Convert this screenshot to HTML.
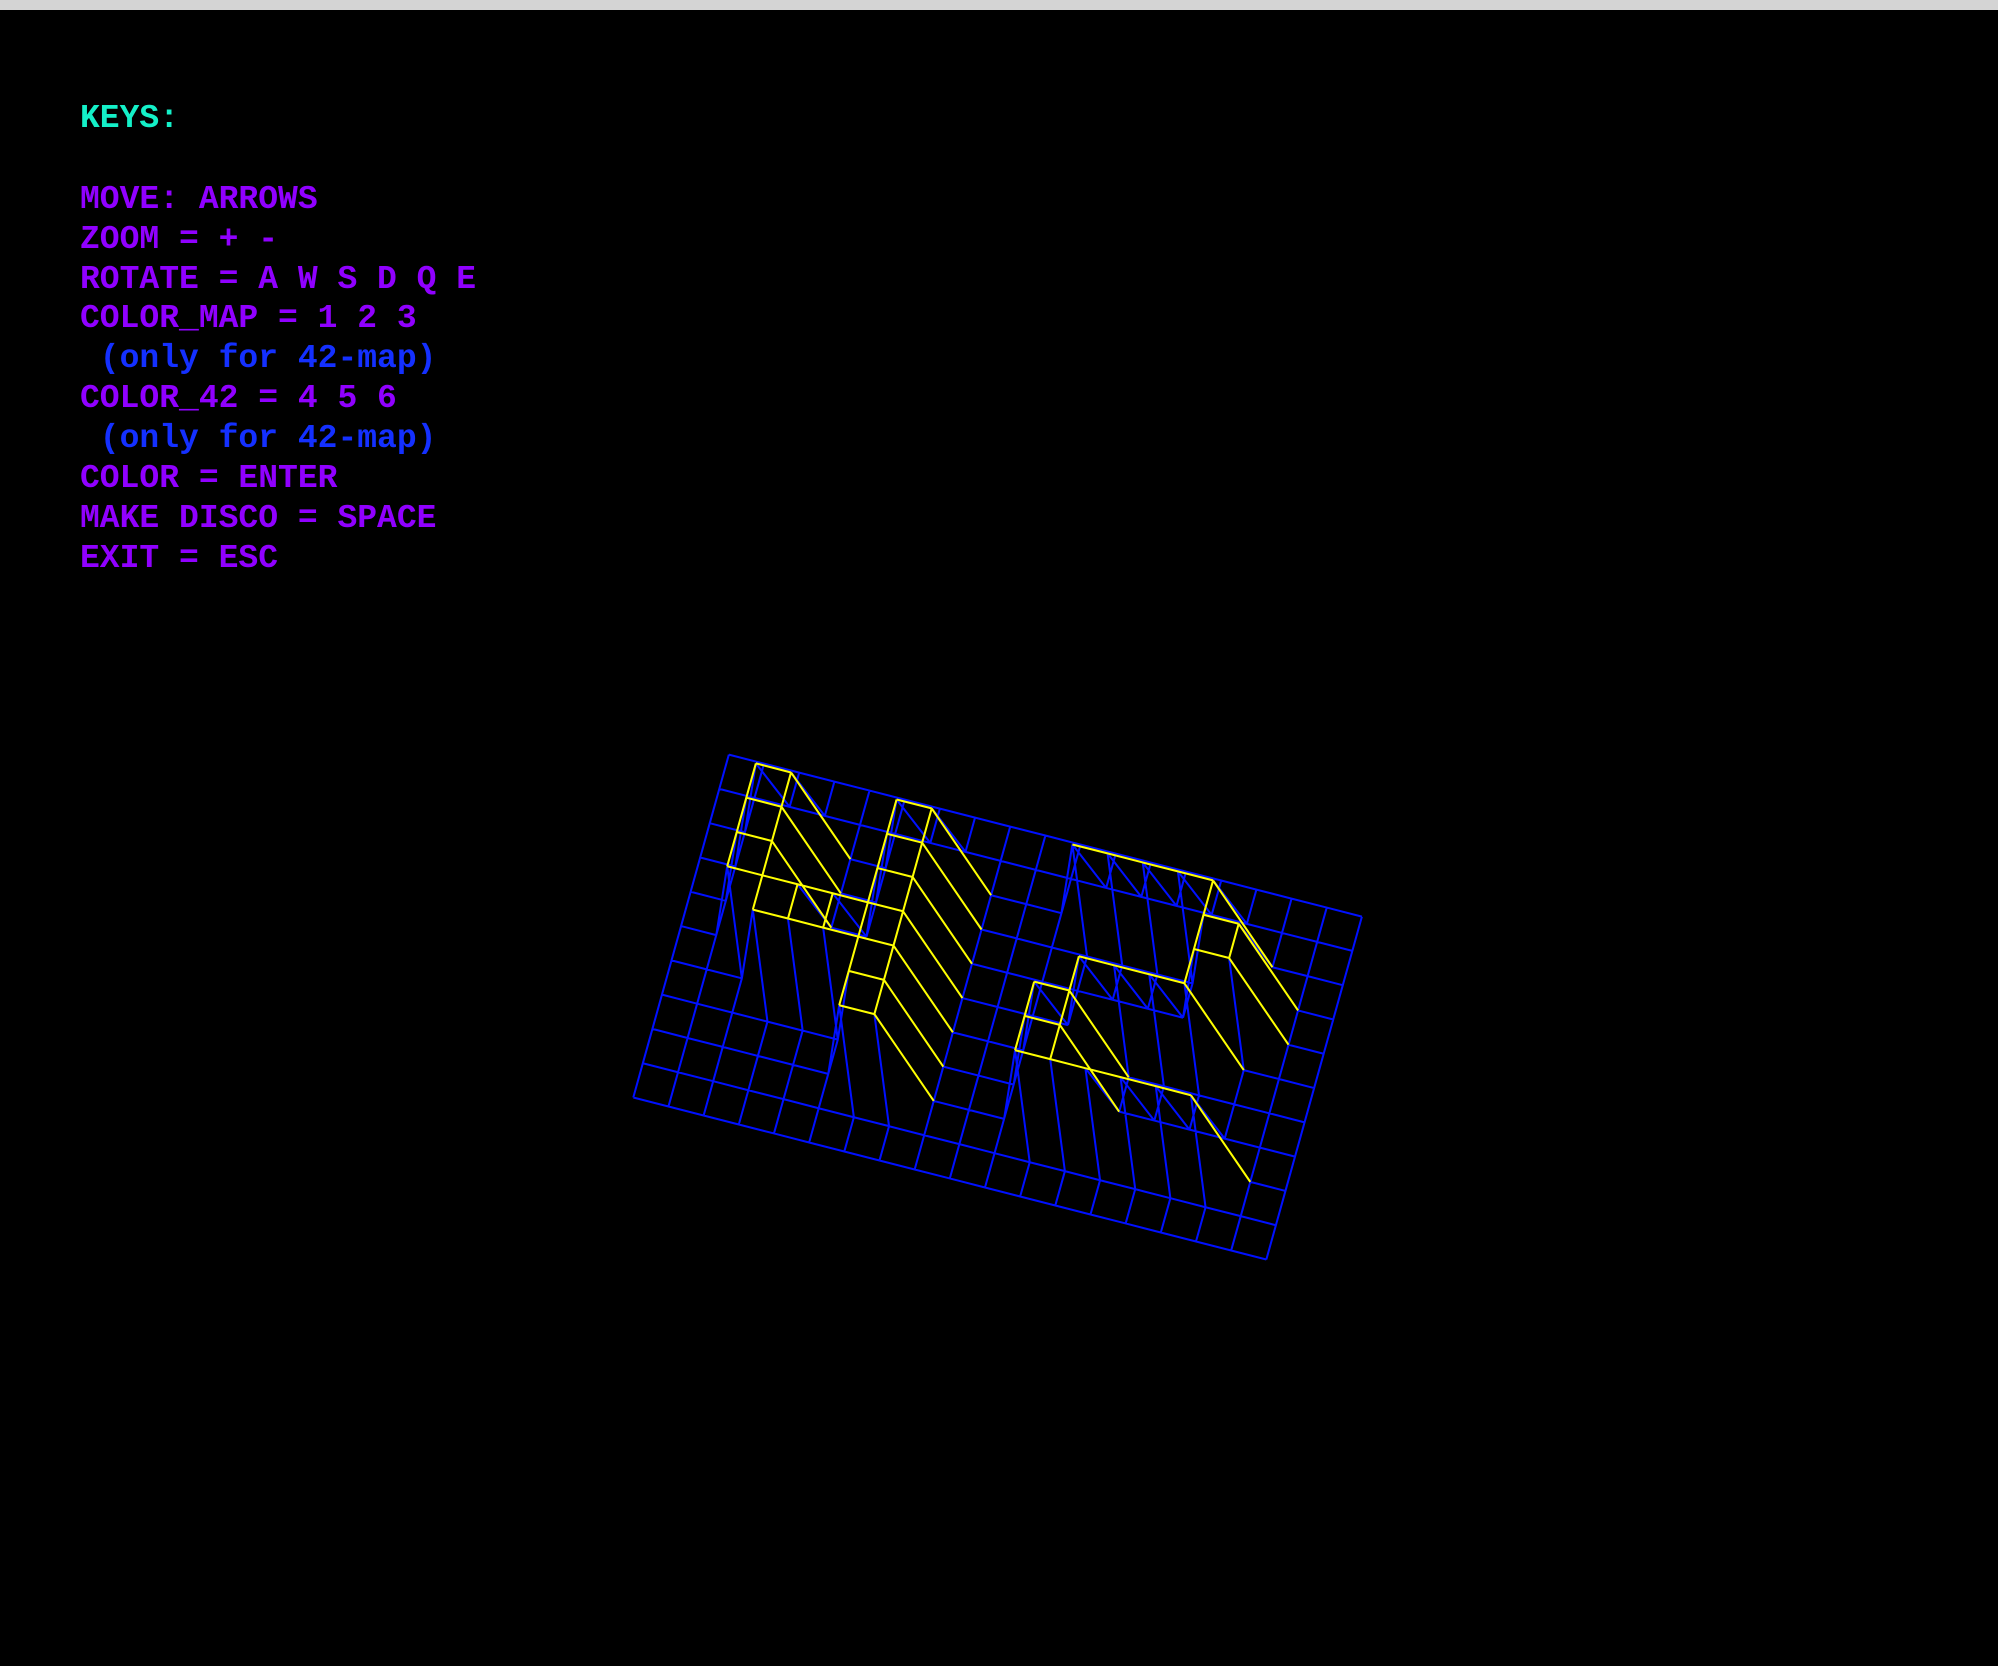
<!DOCTYPE html>
<html><head><meta charset="utf-8"><style>
html,body{margin:0;padding:0;background:#000;width:1998px;height:1666px;overflow:hidden;}
#bar{position:absolute;left:0;top:0;width:1998px;height:10px;background:#d4d4d4;}
.t{position:absolute;left:80px;font-family:"Liberation Mono",monospace;font-weight:bold;font-size:33px;line-height:33px;white-space:pre;color:#9000ff;}
svg{position:absolute;left:0;top:0;}
</style></head><body>
<div id="bar"></div>
<svg id="g" width="1998" height="1666" viewBox="0 0 1568 1307" preserveAspectRatio="none"></svg>
<div class="t" style="top:102px;color:#14f0c8">KEYS:</div>
<div class="t" style="top:183px">MOVE: ARROWS</div>
<div class="t" style="top:223px">ZOOM = + -</div>
<div class="t" style="top:263px">ROTATE = A W S D Q E</div>
<div class="t" style="top:302px">COLOR_MAP = 1 2 3</div>
<div class="t" style="top:342px;color:#1430ff"> (only for 42-map)</div>
<div class="t" style="top:382px">COLOR_42 = 4 5 6</div>
<div class="t" style="top:422px;color:#1430ff"> (only for 42-map)</div>
<div class="t" style="top:462px">COLOR = ENTER</div>
<div class="t" style="top:502px">MAKE DISCO = SPACE</div>
<div class="t" style="top:542px">EXIT = ESC</div>
<script>
var M=[
"0000000000000000000",
"0000000000000000000",
"0011001100011111000",
"0011001100000001100",
"0011001100000001100",
"0011111100001111000",
"0001111100011000000",
"0000001100011000000",
"0000001100011111100",
"0000000000000000000",
"0000000000000000000"];
var O=[572,592],U=[27.6,7.06],V=[-7.5,26.9],H=[-19,-61];
function r(i,j){return M[j][i]==='1';}
function P(i,j){var h=r(i,j)?1:0;return [O[0]+i*U[0]+j*V[0]+h*H[0],O[1]+i*U[1]+j*V[1]+h*H[1]];}
var blue=[],yel=[];
function seg(a,b,y){var s='M'+a[0].toFixed(1)+' '+a[1].toFixed(1)+'L'+b[0].toFixed(1)+' '+b[1].toFixed(1);(y?yel:blue).push(s);}
for(var j=0;j<11;j++)for(var i=0;i<19;i++){
 if(i<18)seg(P(i,j),P(i+1,j),r(i,j));
 if(j<10)seg(P(i,j),P(i,j+1),r(i,j)&&r(i,j+1));
}
var g=document.getElementById('g');
g.innerHTML='<path d="'+blue.join('')+'" stroke="#0010ff" stroke-width="1.6" fill="none"/>'+
'<path d="'+yel.join('')+'" stroke="#ffff00" stroke-width="1.6" fill="none"/>';
</script>
</body></html>
